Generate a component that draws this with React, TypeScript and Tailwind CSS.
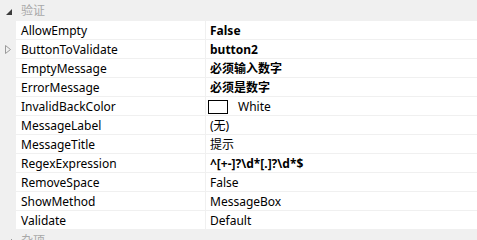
import React from 'react';

interface Prop {
  name: string;
  value: string;
  bold?: boolean;
  color?: boolean;
  expandable?: boolean;
}

const props: Prop[] = [
  { name: 'AllowEmpty', value: 'False', bold: true },
  { name: 'ButtonToValidate', value: 'button2', bold: true, expandable: true },
  { name: 'EmptyMessage', value: '必须输入数字', bold: true },
  { name: 'ErrorMessage', value: '必须是数字', bold: true },
  { name: 'InvalidBackColor', value: 'White', color: true },
  { name: 'MessageLabel', value: '(无)' },
  { name: 'MessageTitle', value: '提示' },
  { name: 'RegexExpression', value: '^[+-]?\\d*[.]?\\d*$', bold: true },
  { name: 'RemoveSpace', value: 'False' },
  { name: 'ShowMethod', value: 'MessageBox' },
  { name: 'Validate', value: 'Default' },
];

const font = { fontFamily: '"Noto Sans", "Noto Sans CJK SC", sans-serif' };

const Category: React.FC<{ title: string }> = ({ title }) => (
  <div className="flex h-[21px] bg-[#f0f0f0]">
    <div className="w-4 flex items-center justify-center pt-[2px]">
      <svg width="6" height="6" viewBox="0 0 6 6" className="ml-[1px]">
        <polygon points="6,0 6,6 0,6" fill="#3c3c3c" />
      </svg>
    </div>
    <div className="flex items-center pl-[5px] pt-[1px] text-[12px] text-[#a8a8a8]">{title}</div>
  </div>
);

const Row: React.FC<{ p: Prop }> = ({ p }) => (
  <div className="flex h-[19px]">
    <div className="w-4 shrink-0 bg-[#f0f0f0] flex items-center justify-center">
      {p.expandable && (
        <svg width="6" height="9" viewBox="0 0 6 9">
          <polygon points="0.5,0.5 5.5,4.5 0.5,8.5" fill="none" stroke="#9a9a9a" strokeWidth="1" />
        </svg>
      )}
    </div>
    <div className="w-[190px] shrink-0 border-b border-r border-[#f0f0f0] pl-[5px] pt-[1px] flex items-center text-[12px] text-black">
      {p.name}
    </div>
    <div
      className={`flex-1 border-b border-[#f0f0f0] pl-[2px] pt-[1px] flex items-center text-[12px] text-black ${
        p.bold ? 'font-bold' : ''
      }`}
    >
      {p.color ? (
        <>
          <span className="w-[20px] h-[14px] border border-black bg-white mr-[9px]" />
          <span className="pl-[1px]">{p.value}</span>
        </>
      ) : (
        <span className="pl-[2px]">{p.value}</span>
      )}
    </div>
  </div>
);

export default function App() {
  return (
    <div className="w-[477px] h-[240px] overflow-hidden bg-white" style={font}>
      <Category title="验证" />
      {props.map((p) => (
        <Row key={p.name} p={p} />
      ))}
      <Category title="杂项" />
    </div>
  );
}
